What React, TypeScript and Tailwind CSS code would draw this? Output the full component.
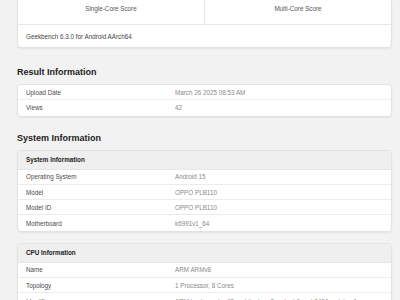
import React from "react";

type Row = { label: string; value: string };

const resultRows: Row[] = [
  { label: "Upload Date", value: "March 26 2025 08:53 AM" },
  { label: "Views", value: "42" },
];

const systemRows: Row[] = [
  { label: "Operating System", value: "Android 15" },
  { label: "Model", value: "OPPO PLB110" },
  { label: "Model ID", value: "OPPO PLB110" },
  { label: "Motherboard", value: "k6991v1_64" },
];

const cpuRows: Row[] = [
  { label: "Name", value: "ARM ARMv8" },
  { label: "Topology", value: "1 Processor, 8 Cores" },
  {
    label: "Identifier",
    value: "ARM implementer 65 architecture 8 variant 0 part 3464 revision 1",
  },
];

const InfoRows: React.FC<{ rows: Row[] }> = ({ rows }) => (
  <div>
    {rows.map((row, i) => (
      <div
        key={row.label}
        className={`flex h-[15.3px] items-center px-2 ${
          i < rows.length - 1 ? "border-b border-[#ececec]" : ""
        }`}
      >
        <div className="w-[149px] text-[#4a4a4a]">{row.label}</div>
        <div className="flex-1 whitespace-nowrap text-[#8a8a8a]">{row.value}</div>
      </div>
    ))}
  </div>
);

const Card: React.FC<{ title?: string; children: React.ReactNode }> = ({
  title,
  children,
}) => (
  <div className="overflow-hidden rounded-[4px] border border-[#e2e2e2] bg-white shadow-[0_1px_2px_rgba(0,0,0,0.06)]">
    {title && (
      <div className="flex h-[19px] items-center border-b border-[#e6e6e6] bg-[#efefef] px-2 font-bold text-[#222]">
        {title}
      </div>
    )}
    {children}
  </div>
);

const Heading: React.FC<{ children: React.ReactNode }> = ({ children }) => (
  <h2 className="text-[9px] font-bold leading-[11px] text-[#222]">{children}</h2>
);

export default function App() {
  return (
    <div
      className="h-[300px] w-[400px] overflow-hidden bg-[#f2f2f2] pl-[17px] pr-[8px] text-[6.3px] leading-[7px]"
      style={{ fontFamily: '"Liberation Sans", Arial, sans-serif' }}
    >
      <div className="overflow-hidden rounded-b-[4px] border-x border-b border-[#e2e2e2] bg-white shadow-[0_1px_2px_rgba(0,0,0,0.06)]">
        <div className="flex h-[25px] border-b border-[#e6e6e6] text-[#555]">
          <div className="flex-1 border-r border-[#e6e6e6] pt-[5px] text-center">
            Single-Core Score
          </div>
          <div className="flex-1 pt-[5px] text-center">Multi-Core Score</div>
        </div>
        <div className="flex h-[22px] items-center px-2 text-[#444]">
          Geekbench 6.3.0 for Android AArch64
        </div>
      </div>

      <div className="mt-[19px]">
        <Heading>Result Information</Heading>
        <div className="mt-[6px]">
          <Card>
            <InfoRows rows={resultRows} />
          </Card>
        </div>
      </div>

      <div className="mt-[16px]">
        <Heading>System Information</Heading>
        <div className="mt-[6px]">
          <Card title="System Information">
            <InfoRows rows={systemRows} />
          </Card>
        </div>
      </div>

      <div className="mt-[11px]">
        <Card title="CPU Information">
          <InfoRows rows={cpuRows} />
        </Card>
      </div>
    </div>
  );
}
